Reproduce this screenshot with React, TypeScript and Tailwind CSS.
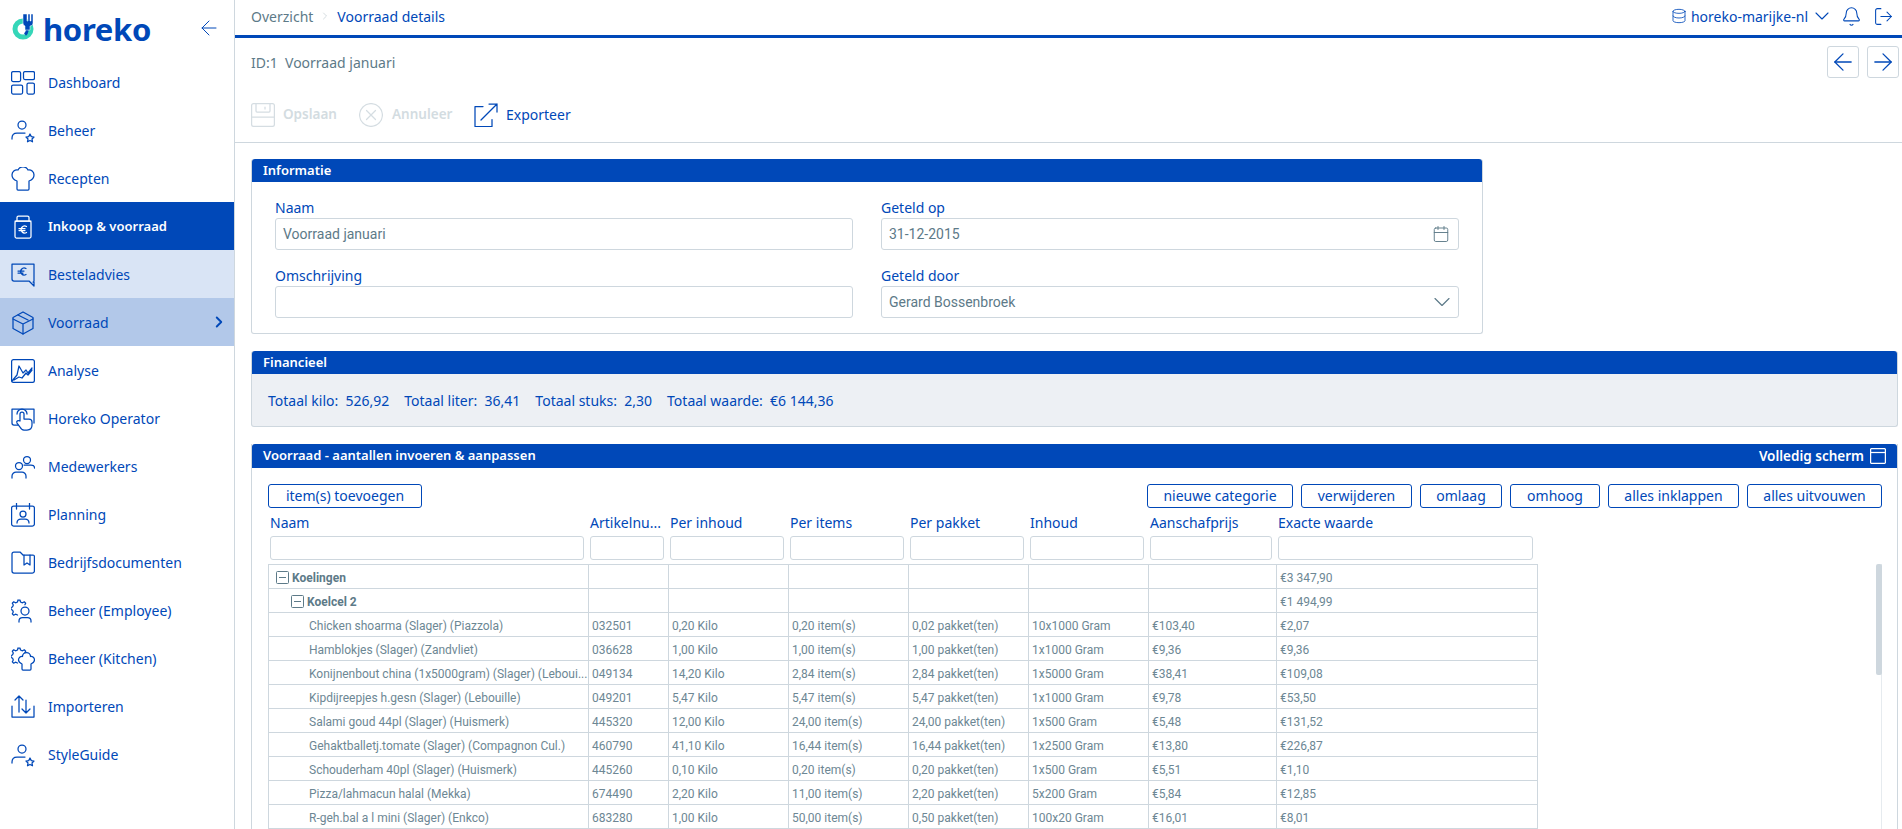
import React from 'react';
import { ArrowLeft, ArrowRight, Bell, Calendar, ChevronDown, ChevronRight, Database, LogOut } from 'lucide-react';

const label = "font-['Noto_Sans',sans-serif]";
const data = "font-['Roboto',sans-serif]";

const Ico = ({ children, className = 'text-[#0048b8]' }: { children: React.ReactNode; className?: string }) => (
  <svg viewBox="0 0 24 24" fill="none" stroke="currentColor" strokeWidth="1.25" strokeLinecap="round" strokeLinejoin="round" className={`w-6 h-6 shrink-0 ${className}`}>
    {children}
  </svg>
);

const userStar = (
  <>
    <circle cx="11" cy="6" r="4" />
    <path d="M1 20v-1c0-3 2-5 5-5h8" />
    <path d="M19 15l1.300 2.600 2.700.4-2 2 .5 2.800-2.500-1.300-2.500 1.300.5-2.800-2-2 2.700-.4z" />
  </>
);

const gear = 'M7 1h2l.5 2 2 .8 1.800-1 1.400 1.400-.8 1.600M7 1l-.5 2-2 .8-1.800-1L1.300 4.200l1 1.800-.8 2-1.500.5v2l1.500.5.8 2-1 1.800 1.400 1.400 1.800-1 2 .8';

const navItems: { name: string; icon: React.ReactNode; state?: string }[] = [
  { name: 'Dashboard', icon: <><rect x="0.6" y="0.6" width="9" height="10" rx="1.500" /><rect x="12.500" y="0.6" width="11" height="8" rx="1.500" /><rect x="0.6" y="14" width="11" height="9" rx="1.500" /><rect x="16" y="12" width="7.400" height="11" rx="1.500" /></> },
  { name: 'Beheer', icon: userStar },
  { name: 'Recepten', icon: <path d="M7 23h10a1 1 0 0 0 1-1v-8c3-1 5-3 5-6a5 5 0 0 0-6-5 5.500 5.500 0 0 0-10 0 5 5 0 0 0-6 5c0 3 2 5 5 6v8a1 1 0 0 0 1 1z" /> },
  { name: 'Inkoop & voorraad', state: 'active', icon: <><rect x="4" y="6" width="16" height="17" rx="1.500" /><path d="M6 6V2.500A1.500 1.500 0 0 1 7.500 1h9A1.500 1.500 0 0 1 18 2.500V6M4 6h16" /><path d="M15.500 11.500a3.500 3.500 0 1 0 0 6M8 13.700h6M8 15.500h6" /></> },
  { name: 'Besteladvies', state: 'light', icon: <><path d="M1 1h22v17a1 1 0 0 1-1 1H23v4l-5-5H3a2 2 0 0 1-2-2z" /><path d="M15 5.500a3.500 3.500 0 1 0 0 6M7 8h6M7 10h5" /></> },
  { name: 'Voorraad', state: 'medium', icon: <><path d="M12 1l10 5.500v11L12 23 2 17.500v-11z" /><path d="M2 8l10 5 10-5M12 13v10M7 4l10 5" /></> },
  { name: 'Analyse', icon: <><rect x="0.6" y="0.6" width="22.800" height="22.800" rx="2" /><path d="M1 22l5-6 2-9 4 7 3-3 2 3 4-5M3 21l5-3 3 1 4-5 2 2 4-5" /></> },
  { name: 'Horeko Operator', icon: <><path d="M7 18H3a2 2 0 0 1-2-2V2h22v14" /><path d="M9 14V7a2 2 0 0 1 4 0v5h5c2 0 3 1 3 3v3c0 3-2 5-5 5h-3c-2 0-3-1-4-3l-3-4c-1-2 1-3 3-2z" /><path d="M6 7a5 5 0 0 1 10 0" /></> },
  { name: 'Medewerkers', icon: <><circle cx="16" cy="5" r="3.500" /><circle cx="8" cy="11" r="3.500" /><path d="M1 23v-2c0-2 2-4 4-4h6c2 0 4 2 4 4v2M13 10h7c2 0 3.500 1 3.500 3" /></> },
  { name: 'Planning', icon: <><rect x="0.6" y="3" width="22.800" height="20" rx="2" /><path d="M5.500 0v6M18.500 0v6" /><circle cx="12" cy="11" r="3" /><path d="M6 20c0-3 2-4 4-4h4c2 0 4 1 4 4" /></> },
  { name: 'Bedrijfsdocumenten', icon: <><path d="M1 3a2 2 0 0 1 2-2h6l3 3h10a1.500 1.500 0 0 1 1.400 1.500V20a2 2 0 0 1-2 2H3a2 2 0 0 1-2-2z" /><path d="M13 4v10l3-2 3 2V4" /></> },
  { name: 'Beheer (Employee)', icon: <><path d={gear} /><circle cx="14" cy="12" r="4" /><path d="M8 23v-1c0-2 1.500-3.500 3.500-3.500h5c2 0 3.500 1.500 3.500 3.500v1" /></> },
  { name: 'Beheer (Kitchen)', icon: <><path d={gear} /><path d="M12 23h7a1 1 0 0 0 1-1v-5c2-1 3.500-2 3.500-4a3.500 3.500 0 0 0-4-3.500 4 4 0 0 0-8 0 3.500 3.500 0 0 0-4 3.500c0 2 1.500 3 3.500 4v5a1 1 0 0 0 1 1z" /></> },
  { name: 'Importeren', icon: <><path d="M1 11v11h22V11" /><path d="M8 17V1M4 5l4-4 4 4M15 5v13M11 14l4 4 4-4" /></> },
  { name: 'StyleGuide', icon: userStar },
];

const rows = [
  ['Chicken shoarma (Slager) (Piazzola)', '032501', '0,20 Kilo', '0,20 item(s)', '0,02 pakket(ten)', '10x1000 Gram', '€103,40', '€2,07'],
  ['Hamblokjes (Slager) (Zandvliet)', '036628', '1,00 Kilo', '1,00 item(s)', '1,00 pakket(ten)', '1x1000 Gram', '€9,36', '€9,36'],
  ['Konijnenbout china (1x5000gram) (Slager) (Leboui...', '049134', '14,20 Kilo', '2,84 item(s)', '2,84 pakket(ten)', '1x5000 Gram', '€38,41', '€109,08'],
  ['Kipdijreepjes h.gesn (Slager) (Lebouille)', '049201', '5,47 Kilo', '5,47 item(s)', '5,47 pakket(ten)', '1x1000 Gram', '€9,78', '€53,50'],
  ['Salami goud 44pl (Slager) (Huismerk)', '445320', '12,00 Kilo', '24,00 item(s)', '24,00 pakket(ten)', '1x500 Gram', '€5,48', '€131,52'],
  ['Gehaktballetj.tomate (Slager) (Compagnon Cul.)', '460790', '41,10 Kilo', '16,44 item(s)', '16,44 pakket(ten)', '1x2500 Gram', '€13,80', '€226,87'],
  ['Schouderham 40pl (Slager) (Huismerk)', '445260', '0,10 Kilo', '0,20 item(s)', '0,20 pakket(ten)', '1x500 Gram', '€5,51', '€1,10'],
  ['Pizza/lahmacun halal (Mekka)', '674490', '2,20 Kilo', '11,00 item(s)', '2,20 pakket(ten)', '5x200 Gram', '€5,84', '€12,85'],
  ['R-geh.bal a l mini (Slager) (Enkco)', '683280', '1,00 Kilo', '50,00 item(s)', '0,50 pakket(ten)', '100x20 Gram', '€16,01', '€8,01'],
];

const headers = ['Naam', 'Artikelnu...', 'Per inhoud', 'Per items', 'Per pakket', 'Inhoud', 'Aanschafprijs', 'Exacte waarde'];
const widths = ['w-[320px]', 'w-[80px]', 'w-[120px]', 'w-[120px]', 'w-[120px]', 'w-[120px]', 'w-[128px]', 'w-[261px]'];
const cellWidths = ['w-[320px]', 'w-[80px]', 'w-[120px]', 'w-[120px]', 'w-[120px]', 'w-[120px]', 'w-[128px]', 'w-[260px]'];

const Bar = ({ title, right, h = 'h-[23px]' }: { title: string; right?: React.ReactNode; h?: string }) => (
  <div className={`${h} bg-[#0048b8] rounded-t-[3px] flex items-center justify-between pl-[11px] pr-[11px] text-white text-[13px] font-semibold ${label}`}>
    <span>{title}</span>
    {right}
  </div>
);

const OutlineButton = ({ text, w }: { text: string; w: string }) => (
  <button className={`${w} h-6 border border-[#0048b8] rounded-[3px] text-[#0048b8] text-[14px] leading-none ${label}`}>{text}</button>
);

const Field = ({ title, children }: { title: string; children: React.ReactNode }) => (
  <div className="w-[578px]">
    <div className={`h-[19px] leading-[19px] text-[14px] text-[#0048b8] ${label}`}>{title}</div>
    <div className={`mt-px h-[32px] border border-[#ced7de] rounded-[3px] flex items-center justify-between pl-[7px] pr-[8px] text-[14px] text-[#5d7a88] ${data}`}>
      {children}
    </div>
  </div>
);

const MinusBox = () => (
  <svg width="13" height="13" viewBox="0 0 13 13" fill="none" stroke="#5d7a88" className="mr-[3px] shrink-0">
    <rect x="0.5" y="0.5" width="12" height="12" rx="1" />
    <path d="M3 6.500h7" />
  </svg>
);

const Row = ({ cells, kind }: { cells: string[]; kind?: 'cat' | 'sub' }) => (
  <div className={`flex h-6 border-b border-[#ced7de] text-[12px] text-[#6d8794] ${data}`}>
    {cells.map((c, i) => (
      <div key={i} className={`${cellWidths[i]} shrink-0 flex items-center pt-[2px] whitespace-nowrap overflow-hidden ${i < 7 ? 'border-r border-[#ced7de]' : ''} ${i === 0 ? (kind === 'cat' ? 'pl-[7px]' : kind === 'sub' ? 'pl-[22px]' : 'pl-[40px]') : 'pl-[3px]'}`}>
        {i === 0 && kind && <MinusBox />}
        <span className={i === 0 && kind ? 'font-bold text-[#5d7a88]' : ''}>{c}</span>
      </div>
    ))}
  </div>
);

export default function App() {
  return (
    <div className="flex h-screen overflow-hidden bg-white">
      <aside className="w-[235px] shrink-0 border-r border-[#ced7de]">
        <div className="h-[58px] flex items-center pl-3 pr-[13px]">
          <svg width="24" height="28" viewBox="0 0 24 28" className="shrink-0 -mt-[4px]">
            <circle cx="11" cy="16" r="8" fill="none" stroke="#35d6b8" strokeWidth="5" />
            <path d="M14 13.500a6 6 0 0 1-1 8" fill="none" stroke="#0048b8" strokeWidth="3" />
            <path d="M11 1v9a3 3 0 0 0 2 3v4h5v-4a3 3 0 0 0 3-3V1h-2v7h-1V1h-2v7h-1V1z" fill="#0048b8" stroke="#fff" strokeWidth="0.5" />
          </svg>
          <span className={`ml-[7px] text-[#0048b8] text-[31px] font-bold leading-none tracking-[-0.3px] ${label}`}>horeko</span>
          <ArrowLeft size={24} strokeWidth={1} className="ml-auto -mt-[2px] text-[#0048b8]" />
        </div>
        <nav>
          {navItems.map((n) => (
            <div key={n.name} className={`h-12 flex items-center pl-[11px] pr-[10px] ${label} ${n.state === 'active' ? 'bg-[#0048b8] font-semibold text-[13px]' : n.state === 'light' ? 'bg-[#d9e4f5] text-[14px]' : n.state === 'medium' ? 'bg-[#b2c8e9] text-[14px]' : 'text-[14px]'}`}>
              <Ico className={n.state === 'active' ? 'text-white mt-[2px]' : 'text-[#0048b8] mt-[2px]'}>{n.icon}</Ico>
              <span className={`ml-[13px] mt-px ${n.state === 'active' ? 'text-white' : 'text-[#0048b8]'}`}>{n.name}</span>
              {n.state === 'medium' && <ChevronRight size={18} strokeWidth={2.5} className="ml-auto mr-[-4px] text-[#0048b8]" />}
            </div>
          ))}
        </nav>
      </aside>

      <main className="flex-1 min-w-0">
        <header className="h-[38px] border-b-[3px] border-[#0048b8] flex items-center pl-[16px] pr-[8px] pb-[3px]">
          <span className={`text-[14px] text-[#5d7a88] ${label}`}>Overzicht</span>
          <ChevronRight size={12} strokeWidth={1} className="mx-[6px] text-[#a9b8c0]" />
          <span className={`text-[14px] text-[#0048b8] ${label}`}>Voorraad details</span>
          <div className="ml-auto flex items-center text-[#0048b8]">
            <Database size={16} strokeWidth={1.25} />
            <span className={`ml-[4px] text-[14px] ${label}`}>horeko-marijke-nl</span>
            <ChevronDown size={24} strokeWidth={1.1} className="ml-[2px]" />
            <Bell size={21} strokeWidth={1.2} className="ml-[7px]" />
            <LogOut size={21} strokeWidth={1.2} className="ml-[11px]" />
          </div>
        </header>

        <div className="h-[105px] border-b border-[#ced7de] pl-[16px] pr-[3px]">
          <div className="flex items-center justify-between pt-[8px]">
            <span className={`text-[14px] text-[#5d7a88] ${label}`}>ID:1&nbsp;&nbsp;Voorraad januari</span>
            <div className="flex gap-2">
              <div className="w-8 h-8 border border-[#ced7de] rounded-[3px] flex items-center justify-center text-[#0048b8]"><ArrowLeft size={28} strokeWidth={1.1} /></div>
              <div className="w-8 h-8 border border-[#ced7de] rounded-[3px] flex items-center justify-center text-[#0048b8]"><ArrowRight size={28} strokeWidth={1.1} /></div>
            </div>
          </div>
          <div className={`mt-[25px] flex items-center text-[13.5px] ${label}`}>
            <Ico className="text-[#d5dde2]"><rect x="0.6" y="0.6" width="22.800" height="22.800" rx="2" /><path d="M5 1v7a1 1 0 0 0 1 1h12a1 1 0 0 0 1-1V1M14 4v2M1 14h22" /></Ico>
            <span className="ml-[8px] w-[55px] -mt-[2px] font-semibold text-[#d3dce1]">Opslaan</span>
            <Ico className="ml-[21px] text-[#d5dde2]"><circle cx="12" cy="12" r="11.400" /><path d="M7.500 7.500l9 9M16.500 7.500l-9 9" /></Ico>
            <span className="ml-[9px] w-[60px] -mt-[2px] font-semibold text-[#d3dce1] whitespace-nowrap">Annuleer</span>
            <Ico className="ml-[22px] text-[#0048b8]"><path d="M9 3.500H1v20h17v-7M7 17L23 1M15 1h8v8" /></Ico>
            <span className="ml-[8px] -mt-[2px] text-[14px] text-[#0048b8]">Exporteer</span>
          </div>
        </div>

        <section className="mt-4 ml-[16px] w-[1232px] border border-[#ced7de] border-t-0 rounded-[3px] h-[175px]">
          <Bar title="Informatie" />
          <div className="px-[23px] pt-[16px] flex justify-between">
            <div className="flex flex-col gap-[16px]">
              <Field title="Naam">Voorraad januari</Field>
              <Field title="Omschrijving">{''}</Field>
            </div>
            <div className="flex flex-col gap-[16px]">
              <Field title="Geteld op">31-12-2015<Calendar size={18} strokeWidth={1.25} /></Field>
              <Field title="Geteld door">Gerard Bossenbroek<ChevronDown size={28} strokeWidth={1} className="mr-[-6px]" /></Field>
            </div>
          </div>
        </section>

        <section className="mt-[17px] ml-[16px] mr-[4px] border border-[#ced7de] border-t-0 rounded-[3px] bg-[#edf0f4] h-[76px]">
          <Bar title="Financieel" />
          <div className={`pl-[16px] pt-[16px] flex gap-[15px] text-[14px] text-[#0048b8] ${label}`}>
            <span>Totaal kilo:&nbsp;&nbsp;526,92</span>
            <span>Totaal liter:&nbsp;&nbsp;36,41</span>
            <span>Totaal stuks:&nbsp;&nbsp;2,30</span>
            <span>Totaal waarde:&nbsp;&nbsp;€6 144,36</span>
          </div>
        </section>

        <section className="mt-[17px] ml-[16px] mr-[4px] border-x border-[#ced7de]">
          <Bar
            h="h-6"
            title="Voorraad - aantallen invoeren & aanpassen"
            right={
              <span className="flex items-center gap-[6px] text-[13.5px]">
                Volledig scherm
                <svg width="16" height="16" viewBox="0 0 16 16" fill="none" stroke="currentColor" strokeWidth="1.25">
                  <rect x="0.6" y="0.6" width="14.800" height="14.800" rx="1" />
                  <path d="M1 4.500h14" />
                </svg>
              </span>
            }
          />
          <div className="pt-[16px] pl-[16px] pr-[15px]">
            <div className="flex">
              <OutlineButton text="item(s) toevoegen" w="w-[154px]" />
              <div className="ml-auto flex gap-2">
                <OutlineButton text="nieuwe categorie" w="w-[146px]" />
                <OutlineButton text="verwijderen" w="w-[111px]" />
                <OutlineButton text="omlaag" w="w-[82px]" />
                <OutlineButton text="omhoog" w="w-[90px]" />
                <OutlineButton text="alles inklappen" w="w-[131px]" />
                <OutlineButton text="alles uitvouwen" w="w-[135px]" />
              </div>
            </div>
            <div className="flex h-[28px] items-center">
              {headers.map((h, i) => (
                <div key={h} className={`${widths[i]} shrink-0 pl-[2px] text-[14px] text-[#0048b8] ${label}`}>{h}</div>
              ))}
            </div>
            <div className="flex">
              {widths.map((w, i) => (
                <div key={i} className={`${w} shrink-0 pl-[2px] pr-[4px]`}>
                  <div className="h-6 border border-[#ced7de] rounded-[3px]" />
                </div>
              ))}
            </div>
            <div className="mt-1 flex">
              <div className="border border-b-0 border-[#ced7de]">
                <Row kind="cat" cells={['Koelingen', '', '', '', '', '', '', '€3 347,90']} />
                <Row kind="sub" cells={['Koelcel 2', '', '', '', '', '', '', '€1 494,99']} />
                {rows.map((r) => <Row key={r[1]} cells={r} />)}
              </div>
              <div className="ml-auto w-[6px] border-r border-[#e6ebef]">
                <div className="w-[6px] h-[111px] bg-[#ced7de] rounded-[2px]" />
              </div>
            </div>
          </div>
        </section>
      </main>
    </div>
  );
}
